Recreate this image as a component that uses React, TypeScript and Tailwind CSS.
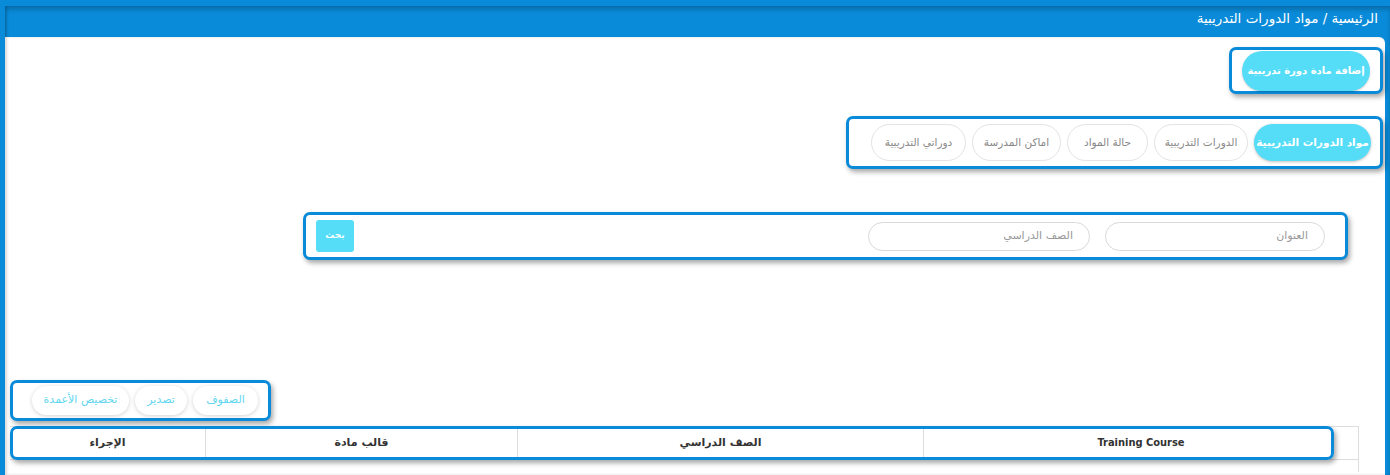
import React from "react";

const box =
  "border-[3px] border-[#0a8bd9] rounded-[7px] shadow-[2px_3px_5px_rgba(0,0,0,0.35)] bg-white";

export default function App() {
  const tabs: [string, number][] = [
    ["مواد الدورات التدريبية", 117],
    ["الدورات التدريبية", 94],
    ["حالة المواد", 81],
    ["اماكن المدرسة", 89],
    ["دوراتي التدريبية", 95],
  ];
  const tools: [string, number][] = [
    ["الصفوف", 65],
    ["تصدير", 52],
    ["تخصيص الأعمدة", 97],
  ];
  return (
    <div
      className="w-[1390px] h-[475px] overflow-hidden bg-[#0a8bd9] relative"
      style={{ fontFamily: '"DejaVu Sans", sans-serif' }}
      dir="rtl"
    >
      <div className="ml-[5px] mt-[6px] h-[469px] flex flex-col shadow-[inset_0_4px_4px_rgba(0,0,0,0.18),inset_2px_0_2px_rgba(0,0,0,0.15)]">
        <div className="h-[31px] flex items-center pr-[12px] pb-[7px] text-white text-[13.5px] shrink-0 whitespace-nowrap">
          الرئيسية / مواد الدورات التدريبية
        </div>
        <div className="relative flex-1 bg-white rounded-tr-[6px] mr-[5px] shadow-[inset_2px_0_3px_rgba(0,0,0,0.15)] flex flex-col">
          {/* add button */}
          <div className={`${box} self-start mt-[10px] mr-[2px] px-[10px] h-[47px] flex items-center`}>
            <button className="h-[40px] w-[128px] rounded-full bg-[#55ddf8] text-white text-[10px] font-bold whitespace-nowrap shadow-[0_1px_2px_rgba(0,0,0,0.2)]">
              إضافة مادة دورة تدريبية
            </button>
          </div>
          {/* tabs */}
          <div className={`${box} self-start mt-[22px] mr-[2px] w-[537px] h-[53px] flex items-center gap-[6px] pr-[9px]`}>
            {tabs.map(([t, w], i) => (
              <div
                key={t}
                style={{ width: w }}
                className={
                  i === 0
                    ? "h-[37px] rounded-full bg-[#55ddf8] text-white text-[10.5px] font-bold whitespace-nowrap flex items-center justify-center shadow-[0_1px_3px_rgba(0,0,0,0.25)]"
                    : "h-[37px] rounded-full bg-white border border-[#e3e3e3] text-[#888] text-[10.5px] whitespace-nowrap flex items-center justify-center"
                }
              >
                {t}
              </div>
            ))}
          </div>
          {/* search */}
          <div className={`${box} self-start mt-[43px] mr-[37px] w-[1045px] h-[48px] flex items-center pr-[20px] pl-[10px]`}>
            <div className="w-[220px] h-[29px] rounded-full border border-[#d9d9d9] flex items-center px-[16px] text-[11px] text-[#999]">
              العنوان
            </div>
            <div className="w-[222px] h-[29px] mr-[15px] rounded-full border border-[#d9d9d9] flex items-center px-[16px] text-[11px] text-[#999]">
              الصف الدراسي
            </div>
            <button className="mr-auto w-[38px] h-[32px] rounded-[3px] bg-[#55ddf8] text-white text-[9px] font-bold flex items-center justify-center">
              بحث
            </button>
          </div>
          {/* toolbar */}
          <div className={`${box} self-end mt-[120px] ml-[5px] w-[261px] h-[41px] flex items-center gap-[6px] pr-[10px]`}>
            {tools.map(([t, w]) => (
              <div
                key={t}
                style={{ width: w }}
                className="h-[29px] rounded-full bg-white text-[#62d6ef] text-[11px] whitespace-nowrap flex items-center justify-center shadow-[0_1px_4px_rgba(0,0,0,0.18)]"
              >
                {t}
              </div>
            ))}
          </div>
          {/* table */}
          <div className="relative mt-[5px] mr-[26px] ml-[5px]">
            <div className="grid grid-cols-[435px_406px_312px_1fr] border border-[#dddddd] border-l-0 text-[11px] font-bold text-[#333] h-[34px]">
              <div className="flex items-center justify-center border-l border-[#dddddd]" style={{ fontFamily: '"Liberation Sans Narrow", "DejaVu Sans Condensed", sans-serif' }}>
                Training Course
              </div>
              <div className="flex items-center justify-center border-l border-[#dddddd]">الصف الدراسي</div>
              <div className="flex items-center justify-center border-l border-[#dddddd]">قالب مادة</div>
              <div className="flex items-center justify-center">الإجراء</div>
            </div>
            <div className="h-[12px] border-r border-[#dddddd]" />
            <div className="absolute top-0 left-0 right-[25px] h-[34px] border-[3px] border-[#0a8bd9] rounded-[7px] shadow-[2px_3px_5px_rgba(0,0,0,0.35)]" />
          </div>
        </div>
      </div>
    </div>
  );
}
